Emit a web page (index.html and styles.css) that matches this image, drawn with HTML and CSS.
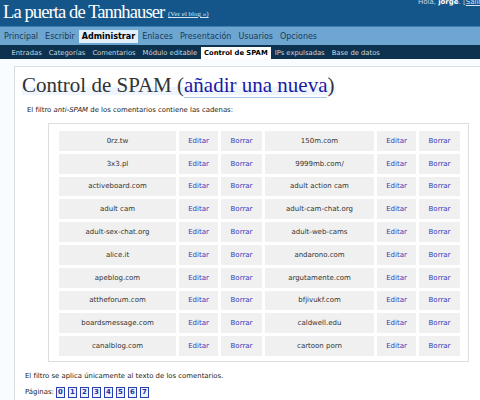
FILE: index.html
```html
<!DOCTYPE html>
<html lang="es">
<head>
<meta charset="utf-8">
<title>Control de SPAM</title>
<link rel="stylesheet" href="styles.css">
</head>
<body>
<div class="page">
  <div class="head">
    <h1 class="blog-title">La puerta de Tannhauser <a class="viewsite" href="#">(Ver el blog »)</a></h1>
    <div class="user">Hola, <strong>jorge</strong>. [<a href="#">Salir</a>]</div>
  </div>
  <ul class="menu">
    <li><a href="#">Principal</a></li>
    <li><a href="#">Escribir</a></li>
    <li class="current"><a href="#">Administrar</a></li>
    <li><a href="#">Enlaces</a></li>
    <li><a href="#">Presentación</a></li>
    <li><a href="#">Usuarios</a></li>
    <li><a href="#">Opciones</a></li>
  </ul>
  <ul class="submenu">
    <li><a href="#">Entradas</a></li>
    <li><a href="#">Categorías</a></li>
    <li><a href="#">Comentarios</a></li>
    <li><a href="#">Módulo editable</a></li>
    <li class="current"><a href="#">Control de SPAM</a></li>
    <li><a href="#">IPs expulsadas</a></li>
    <li><a href="#">Base de datos</a></li>
  </ul>
  <div class="wrap">
    <h2><span class="h2text">Control de SPAM (<a href="#">añadir una nueva</a>)</span></h2>
    <p class="intro">El filtro <em>anti-SPAM</em> de los comentarios contiene las cadenas:</p>
    <div class="listbox">
      <table class="spam">
        <tr><td class="w">0rz.tw</td><td class="e"><a href="#">Editar</a></td><td class="b"><a href="#">Borrar</a></td><td class="w2">150m.com</td><td class="e"><a href="#">Editar</a></td><td class="b"><a href="#">Borrar</a></td></tr>
        <tr><td class="w">3x3.pl</td><td class="e"><a href="#">Editar</a></td><td class="b"><a href="#">Borrar</a></td><td class="w2">9999mb.com/</td><td class="e"><a href="#">Editar</a></td><td class="b"><a href="#">Borrar</a></td></tr>
        <tr><td class="w">activeboard.com</td><td class="e"><a href="#">Editar</a></td><td class="b"><a href="#">Borrar</a></td><td class="w2">adult action cam</td><td class="e"><a href="#">Editar</a></td><td class="b"><a href="#">Borrar</a></td></tr>
        <tr><td class="w">adult cam</td><td class="e"><a href="#">Editar</a></td><td class="b"><a href="#">Borrar</a></td><td class="w2">adult-cam-chat.org</td><td class="e"><a href="#">Editar</a></td><td class="b"><a href="#">Borrar</a></td></tr>
        <tr><td class="w">adult-sex-chat.org</td><td class="e"><a href="#">Editar</a></td><td class="b"><a href="#">Borrar</a></td><td class="w2">adult-web-cams</td><td class="e"><a href="#">Editar</a></td><td class="b"><a href="#">Borrar</a></td></tr>
        <tr><td class="w">alice.it</td><td class="e"><a href="#">Editar</a></td><td class="b"><a href="#">Borrar</a></td><td class="w2">andarono.com</td><td class="e"><a href="#">Editar</a></td><td class="b"><a href="#">Borrar</a></td></tr>
        <tr><td class="w">apeblog.com</td><td class="e"><a href="#">Editar</a></td><td class="b"><a href="#">Borrar</a></td><td class="w2">argutamente.com</td><td class="e"><a href="#">Editar</a></td><td class="b"><a href="#">Borrar</a></td></tr>
        <tr><td class="w">attheforum.com</td><td class="e"><a href="#">Editar</a></td><td class="b"><a href="#">Borrar</a></td><td class="w2">bfjivukf.com</td><td class="e"><a href="#">Editar</a></td><td class="b"><a href="#">Borrar</a></td></tr>
        <tr><td class="w">boardsmessage.com</td><td class="e"><a href="#">Editar</a></td><td class="b"><a href="#">Borrar</a></td><td class="w2">caldwell.edu</td><td class="e"><a href="#">Editar</a></td><td class="b"><a href="#">Borrar</a></td></tr>
        <tr><td class="w">canalblog.com</td><td class="e"><a href="#">Editar</a></td><td class="b"><a href="#">Borrar</a></td><td class="w2">cartoon porn</td><td class="e"><a href="#">Editar</a></td><td class="b"><a href="#">Borrar</a></td></tr>
      </table>
    </div>
    <p class="note">El filtro se aplica únicamente al texto de los comentarios.</p>
    <p class="pages">Páginas: <a href="#">0</a><a href="#">1</a><a href="#">2</a><a href="#">3</a><a href="#">4</a><a href="#">5</a><a href="#">6</a><a href="#">7</a></p>
  </div>
</div>
</body>
</html>
```
FILE: styles.css
```css
html, body {
  margin: 0;
  padding: 0;
  background: #f9fcfe;
  overflow: hidden;
}
body {
  font-family: "DejaVu Sans", Verdana, sans-serif;
  color: #333;
}
a { text-decoration: none; }

.page {
  width: 500px;
}

.head {
  background: #14568a;
  height: 26px;
  display: flex;
  justify-content: space-between;
  align-items: flex-start;
  border-bottom: 1px solid #3d7fb3;
}
.blog-title {
  margin: 0;
  padding: 2px 0 0 3px;
  font-family: "Liberation Serif", "Times New Roman", serif;
  font-weight: normal;
  font-size: 18.6px;
  line-height: 20px;
  letter-spacing: -0.05em;
  color: #fff;
  white-space: nowrap;
}
.viewsite {
  font-size: 7px;
  letter-spacing: 0;
  color: #d8e6f1;
  text-decoration: underline;
  vertical-align: 2px;
}
.user {
  font-size: 7px;
  line-height: 8px;
  margin-top: -2px;
  padding-right: 16px;
  color: #c9d9e6;
  white-space: nowrap;
}
.user strong { color: #fff; }
.user a { color: #d6e5f1; text-decoration: underline; }

.menu {
  list-style: none;
  margin: 0;
  padding: 3px 0 2px 1px;
  height: 13px;
  background: #6da6d1;
  display: flex;
  gap: 1px;
  font-size: 8px;
}
.menu li a {
  display: block;
  padding: 0 3px;
  line-height: 13px;
  color: #1b3a55;
}
.menu li.current a {
  background: #e4f0f9;
  color: #000;
  font-weight: bold;
}

.submenu {
  list-style: none;
  margin: 0;
  padding: 2px 0 0 8px;
  height: 12px;
  background: #0d324f;
  display: flex;
  gap: 0;
  font-size: 6.8px;
}
.submenu li a {
  display: block;
  padding: 0 3.5px;
  line-height: 12px;
  color: #ccd6de;
}
.submenu li.current a {
  background: #fff;
  color: #000;
  font-weight: bold;
}

.wrap {
  margin: 7px 0 0 14px;
  background: #fff;
  border: 1px solid #dadde0;
  border-right: none;
  padding: 7px 0 20px 0;
}
h2 {
  margin: 0 0 0 7px;
  font-family: "Liberation Serif", "Times New Roman", serif;
  font-weight: normal;
  font-size: 21px;
  line-height: 22px;
  color: #333;
}
.h2text {
  display: inline-block;
  padding-right: 2px;
  background: linear-gradient(to bottom, transparent 0, transparent 13px, #eef5fc 13px, #eef5fc 21px, transparent 21px);
}
h2 a {
  color: #1a1aa6;
  border-bottom: 1px solid #a8c8e8;
  line-height: 17px;
}

.intro {
  margin: 9px 0 0 12px;
  font-size: 6.9px;
  line-height: 10px;
  color: #222;
}

.listbox {
  margin: 8px 0 0 33px;
  width: 406px;
  border: 1px solid #dedede;
  padding: 4px 6px 2px 7px;
}
.spam {
  border-collapse: separate;
  border-spacing: 3px 3px;
  font-size: 7px;
  table-layout: fixed;
  width: 406px;
}
.spam td {
  background: #f0f0f0;
  height: 19.8px;
  padding: 0;
  text-align: center;
  color: #333;
}
.spam td.w { width: 117px; }
.spam td.e { width: 39px; }
.spam td.b { width: 41px; }
.spam td.w2 { width: 109px; }
.spam td a { color: #3a3ab8; }

.note {
  margin: 9px 0 0 10px;
  font-size: 6.9px;
  line-height: 10px;
  color: #222;
}
.pages {
  margin: 6px 0 0 10px;
  font-size: 6.9px;
  line-height: 11px;
  color: #222;
  display: flex;
  align-items: center;
}
.pages a {
  display: inline-block;
  width: 7px;
  height: 9px;
  line-height: 9px;
  text-align: center;
  border: 1px solid #2a3fb0;
  background: #eef3fb;
  color: #1a2fa6;
  font-weight: bold;
  margin-left: 3px;
}
.pages a:first-child { margin-left: 2px; }
```
